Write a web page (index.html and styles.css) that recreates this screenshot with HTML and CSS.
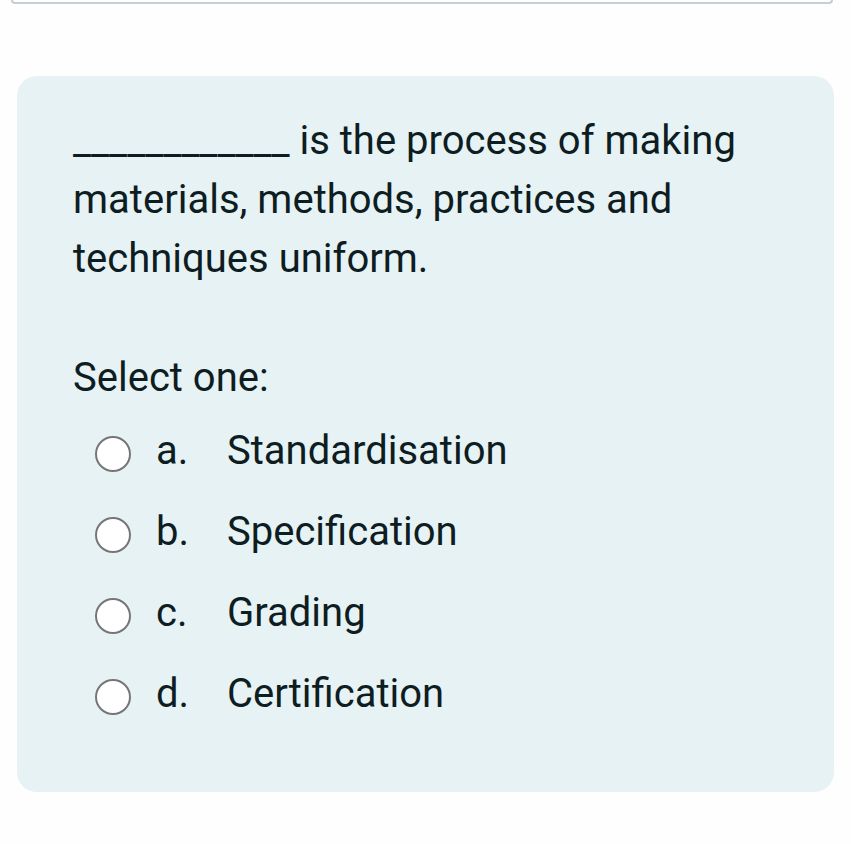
FILE: index.html
```html
<!DOCTYPE html>
<html>
<head>
<meta charset="utf-8">
<link rel="stylesheet" href="styles.css">
</head>
<body>
<div class="topbox"></div>
<div class="card">
  <div class="qtext"><span class="blank">____________</span> is the process of making materials, methods, practices and techniques uniform.</div>
  <div class="prompt">Select one:</div>
  <div class="answers">
    <label class="opt"><span class="radio"></span><span class="letter">a.</span><span class="label">Standardisation</span></label>
    <label class="opt"><span class="radio"></span><span class="letter">b.</span><span class="label">Specification</span></label>
    <label class="opt"><span class="radio"></span><span class="letter">c.</span><span class="label">Grading</span></label>
    <label class="opt"><span class="radio"></span><span class="letter">d.</span><span class="label">Certification</span></label>
  </div>
</div>
</body>
</html>
```
FILE: styles.css
```css
html, body {
  margin: 0;
  padding: 0;
  background: #fefefe;
}
body {
  font-family: Roboto, "Liberation Sans", sans-serif;
  color: #0e1d22;
  width: 851px;
  height: 844px;
  overflow: hidden;
}
.topbox {
  margin: 0 18px 0 11px;
  height: 2px;
  border: 2px solid #c6cfd5;
  border-top: none;
  border-radius: 0 0 6px 6px;
}
.card {
  margin: 72px 17px 0 17px;
  background: #e7f2f5;
  border-radius: 20px;
  height: 716px;
  box-sizing: border-box;
  padding: 35px 56px 0 56px;
  font-size: 40px;
}
.qtext {
  line-height: 59px;
  width: 690px;
}
.prompt {
  margin-top: 60px;
  line-height: 59px;
}
.answers {
  margin-top: 3px;
  display: flex;
  flex-direction: column;
}
.opt {
  display: flex;
  align-items: center;
  height: 81px;
}
.radio {
  width: 32px;
  height: 32px;
  border: 2px solid #767676;
  border-radius: 50%;
  background: #fff;
  margin-left: 22px;
  margin-right: 25px;
  margin-top: 6px;
  flex: none;
}
.letter {
  width: 71px;
}
```
